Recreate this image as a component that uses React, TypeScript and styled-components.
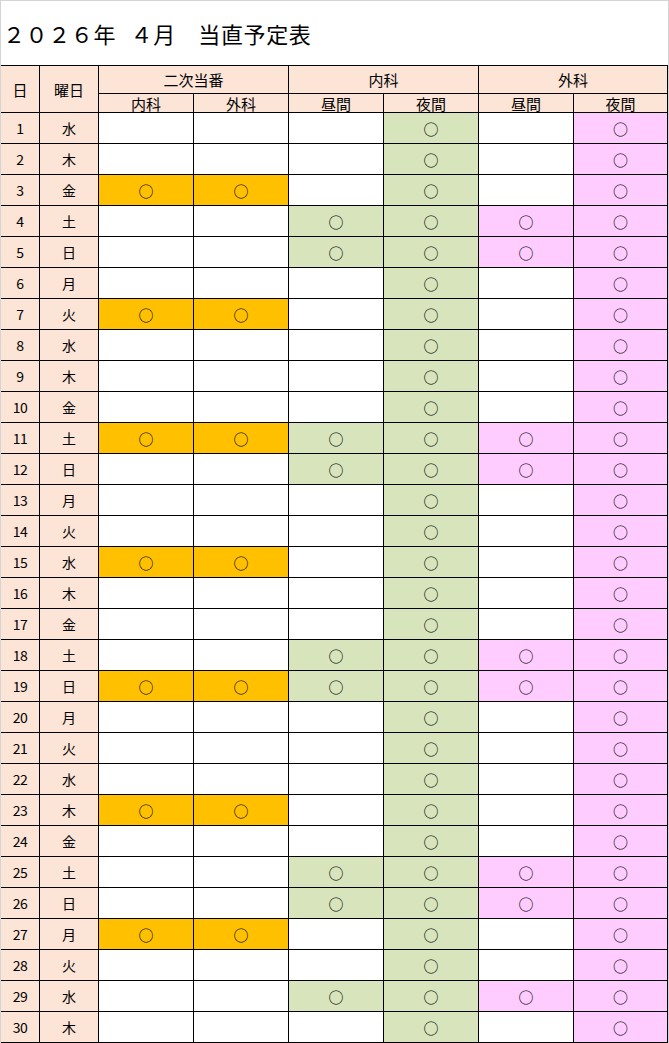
import React from 'react'
import styled, { createGlobalStyle } from 'styled-components'

const GlobalStyle = createGlobalStyle`
  html, body {
    margin: 0;
    padding: 0;
    background: #ffffff;
  }
  body {
    font-family: "Noto Sans CJK JP", "Noto Sans", sans-serif;
    color: #000;
  }
`

type Fill = 'none' | 'gold' | 'green' | 'pink'

const fills: Record<Fill, string> = {
  none: '#ffffff',
  gold: '#ffc000',
  green: '#d8e4bc',
  pink: '#ffccff',
}

const Sheet = styled.div`
  width: 667px;
  height: 1042px;
  border-top: 1px solid #d4d4d4;
  border-left: 1px solid #d4d4d4;
  border-right: 1px solid #d4d4d4;
  background: #ffffff;
  overflow: hidden;
`

const TitleBar = styled.div`
  height: 64px;
  display: flex;
  align-items: center;
  padding-left: 2px;
`

const Title = styled.h1`
  margin: 0;
  font-size: 22px;
  font-weight: 400;
  letter-spacing: 0.6px;
  word-spacing: 9px;
  white-space: pre;
  line-height: 1;
`

const Grid = styled.div`
  display: grid;
  grid-template-columns: 38px 58px 94px 94px 94px 94px 94px 93px;
  grid-template-rows: 27px 18px repeat(30, 30px);
  gap: 1px;
  background: #000;
  border-top: 1px solid #000;
  border-right: 1px solid #000;
  border-bottom: 1px solid #000;
`

const HeadCell = styled.div<{ $rows?: number; $cols?: number; $sub?: boolean }>`
  background: #fce4d6;
  grid-row: span ${p => p.$rows ?? 1};
  grid-column: span ${p => p.$cols ?? 1};
  display: flex;
  align-items: center;
  justify-content: center;
  font-size: 15px;
  line-height: 1;
  padding-top: ${p => (p.$sub ? '1px' : '0')};
`

const DayCell = styled.div`
  background: #fce4d6;
  display: flex;
  align-items: center;
  justify-content: center;
  font-size: 14px;
  letter-spacing: -0.5px;
`

const DowCell = styled.div`
  background: #fce4d6;
  display: flex;
  align-items: center;
  justify-content: center;
  font-size: 14px;
`

const MarkCell = styled.div<{ $fill: Fill }>`
  background: ${p => fills[p.$fill]};
  display: flex;
  align-items: center;
  justify-content: center;
  font-size: 15px;
  line-height: 1;
`

const weekdays = ['水', '木', '金', '土', '日', '月', '火']
const dayShift = [4, 5, 11, 12, 18, 19, 25, 26, 29]

type Row = {
  day: number
  dow: string
  secondary: boolean
  daytime: boolean
}

const rows: Row[] = Array.from({ length: 30 }, (_, i) => {
  const day = i + 1
  return {
    day,
    dow: weekdays[i % 7],
    secondary: day % 4 === 3,
    daytime: dayShift.includes(day),
  }
})

const Mark = ({ on, fill }: { on: boolean; fill: Fill }) => (
  <MarkCell $fill={on ? fill : 'none'}>{on ? '○' : ''}</MarkCell>
)

export default function App() {
  return (
    <>
      <GlobalStyle />
      <Sheet>
        <TitleBar>
          <Title>２０２６年 ４月　当直予定表</Title>
        </TitleBar>
        <Grid>
          <HeadCell $rows={2}>日</HeadCell>
          <HeadCell $rows={2}>曜日</HeadCell>
          <HeadCell $cols={2}>二次当番</HeadCell>
          <HeadCell $cols={2}>内科</HeadCell>
          <HeadCell $cols={2}>外科</HeadCell>
          <HeadCell $sub>内科</HeadCell>
          <HeadCell $sub>外科</HeadCell>
          <HeadCell $sub>昼間</HeadCell>
          <HeadCell $sub>夜間</HeadCell>
          <HeadCell $sub>昼間</HeadCell>
          <HeadCell $sub>夜間</HeadCell>
          {rows.map(r => (
            <React.Fragment key={r.day}>
              <DayCell>{r.day}</DayCell>
              <DowCell>{r.dow}</DowCell>
              <Mark on={r.secondary} fill="gold" />
              <Mark on={r.secondary} fill="gold" />
              <Mark on={r.daytime} fill="green" />
              <Mark on fill="green" />
              <Mark on={r.daytime} fill="pink" />
              <Mark on fill="pink" />
            </React.Fragment>
          ))}
        </Grid>
      </Sheet>
    </>
  )
}
